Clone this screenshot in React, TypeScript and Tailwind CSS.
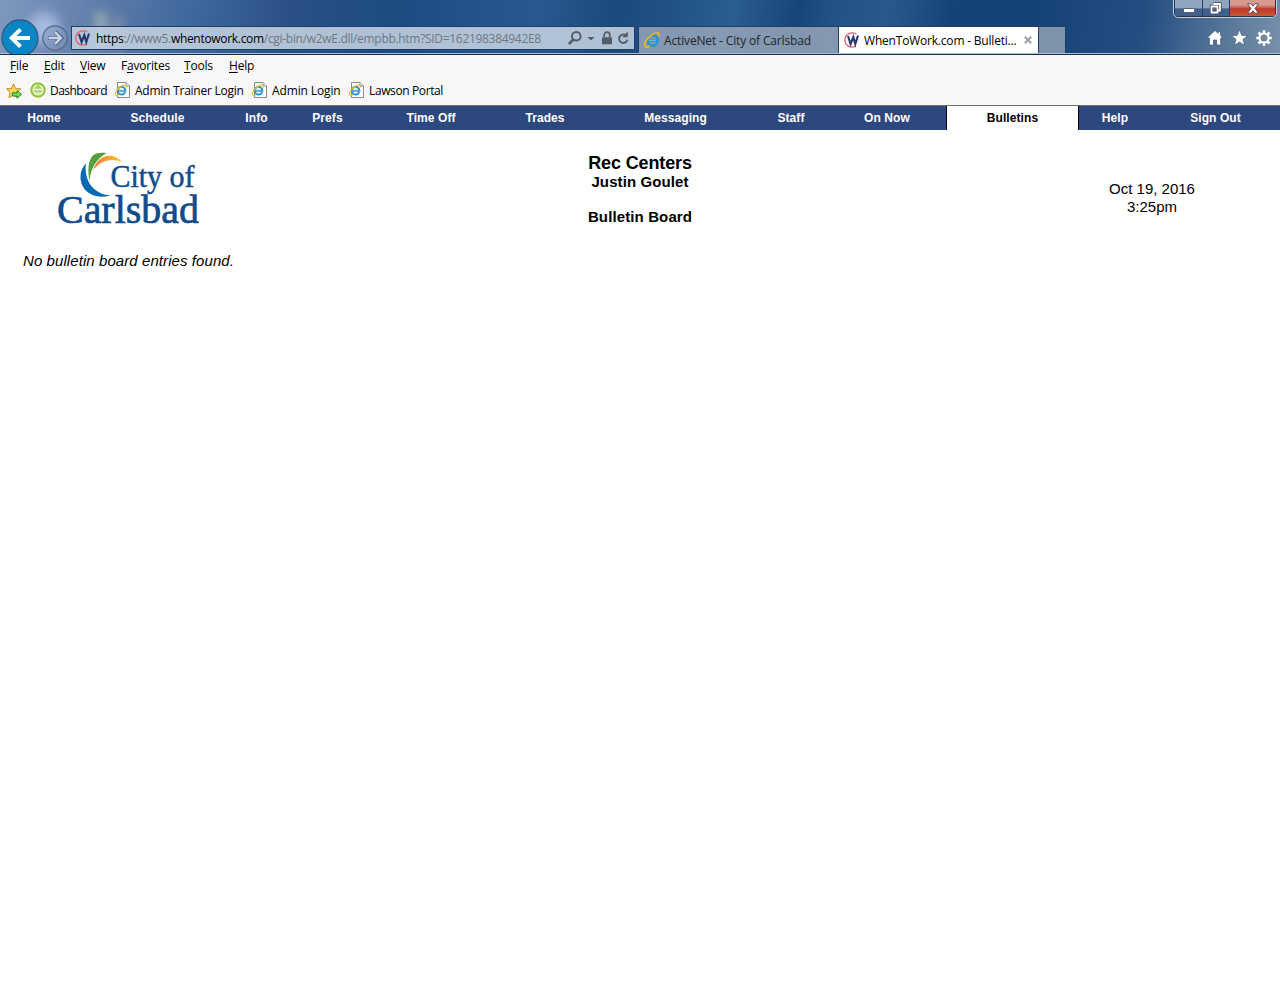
import React from "react";

function WhenToWorkIcon() {
  return (
    <svg className="h-4 w-4 shrink-0" viewBox="0 0 16 16" fill="none">
      <path d="M12.500 2C7.500-.8.9 1.800.9 8c0 6.500 6.500 8.600 11.100 6" stroke="#e0606a" strokeWidth="1.300" />
      <path d="M4 4 6.600 12 9.300 5l2 7L14 3.500" stroke="#26396f" strokeWidth="2.100" />
    </svg>
  );
}

function ExplorerGlyph() {
  return (
    <>
      <path d="M13.500 10.500A5.200 5.200 0 1 1 13.900 8.600H5" fill="none" stroke="#2a92d2" strokeWidth="2.600" />
      <path d="M5 8.300h7" stroke="#8fd6f5" strokeWidth=".8" />
      <path d="M14.800 4.500C16 .3 12 0 8.300 2.500 3.300 5.500-.8 12 1.200 14.500c.8 1 2.600.5 4.200-.5" fill="none" stroke="#f3bd16" strokeWidth="1.500" />
    </>
  );
}

function ExplorerIcon() {
  return (
    <svg className="h-4 w-4 shrink-0" viewBox="0 0 16 16">
      <ExplorerGlyph />
    </svg>
  );
}

function PageIcon() {
  return (
    <svg className="relative -top-px h-4 w-4 shrink-0" viewBox="0 0 16 16">
      <path d="M2.500.5h8.500l3.500 3.500v11.500h-12z" fill="#fdfdfd" stroke="#8b8b8b" />
      <path d="M11 .5v3.500h3.500" fill="#eee" stroke="#8b8b8b" />
      <g transform="translate(0 2.300) scale(.75)">
        <ExplorerGlyph />
      </g>
    </svg>
  );
}

function DashboardIcon() {
  return (
    <svg className="relative -top-px h-4 w-4 shrink-0" viewBox="0 0 16 16">
      <rect width="16" height="16" fill="#fff" />
      <circle cx="8" cy="8" r="6.700" fill="#f2f8e2" stroke="#8fc63d" strokeWidth="2.200" />
      <path d="M3.500 6.800 8 2.500l4.500 4.300z" fill="#a5d15b" />
      <path d="M4 8.500h3.500v1.700H5zM8.500 8.500H12l-1 1.700H8.500zM6 12h4" fill="#a5d15b" stroke="#a5d15b" strokeWidth=".6" />
    </svg>
  );
}

function AddFavoriteIcon() {
  return (
    <svg className="h-4 w-4 shrink-0" viewBox="0 0 16 16">
      <path d="m7.500.8 2 4.700 5.300.4-4 3.500 1.300 5.200-4.600-2.700-4.600 2.700 1.200-5.200L.5 5.900l5-.4z" fill="#fbd85c" stroke="#cf8a16" strokeLinejoin="round" />
      <path d="M6.500 9.800H11V7.700l4.500 3.700-4.500 3.800v-2.100H6.500z" fill="#6fdc55" stroke="#167c18" strokeWidth=".9" />
    </svg>
  );
}

function BackButton() {
  return (
    <svg className="h-[38px] w-[38px] shrink-0" viewBox="0 0 38 38">
      <circle cx="19" cy="19" r="18" fill="#0a86c6" stroke="#2f5c7d" strokeWidth="1.300" />
      <path d="M29 19H11.500M19.500 10.300 10.800 19l8.700 8.700" fill="none" stroke="#fff" strokeWidth="4" />
    </svg>
  );
}

function ForwardButton() {
  return (
    <svg className="h-[26px] w-[26px] shrink-0" viewBox="0 0 26 26">
      <circle cx="13" cy="13" r="12.200" fill="#8297bd" fillOpacity=".55" stroke="#506889" strokeWidth="1.200" />
      <path d="M6 13h13M13 6.700l6.300 6.300-6.300 6.300" fill="none" stroke="#53698e" strokeWidth="4.200" />
      <path d="M6.500 13h12M13 7.200l5.800 5.800-5.800 5.800" fill="none" stroke="#cbd5e5" strokeWidth="2.400" />
    </svg>
  );
}

function AddressTools() {
  return (
    <svg className="h-4 w-[62px] shrink-0" viewBox="0 0 62 16" fill="none" stroke="#545c67">
      <circle cx="8.300" cy="6.300" r="4.300" strokeWidth="2" />
      <path d="M5.300 9.500.9 14" strokeWidth="2.600" />
      <path d="M19.500 7h7L23 10.500z" fill="#545c67" stroke="none" />
      <path d="M34 7.300h10v7H34z" fill="#545c67" stroke="none" />
      <path d="M36.200 7.300V5a2.800 2.800 0 0 1 5.600 0v2.300" strokeWidth="1.800" />
      <path d="M58 5.500a4.200 4.200 0 1 0 1.400 4.200" strokeWidth="1.900" />
      <path d="M59.800 1.500v5.700h-5.600z" fill="#545c67" stroke="none" />
    </svg>
  );
}

function WindowButtons() {
  return (
    <div className="absolute right-[3px] top-[-1px] flex h-[19px] w-[104px] overflow-hidden rounded-b-[5px] border border-[#c3cfdd] bg-[#26374d] p-px pt-0">
      <div className="flex w-[28px] items-center justify-center border-r border-[#2c3e58] bg-gradient-to-b from-[#92a5bf] from-50% to-[#405f8a] to-55%">
        <svg className="mt-1 h-[5px] w-3" viewBox="0 0 12 5">
          <path d="M.5.5h11v4H.5z" fill="#fff" stroke="#566174" />
        </svg>
      </div>
      <div className="flex w-[27px] items-center justify-center border-r border-[#2c3e58] bg-gradient-to-b from-[#92a5bf] from-50% to-[#405f8a] to-55% pr-[2px]">
        <svg className="h-[13px] w-[13px]" viewBox="0 0 13 13" fill="none">
          <path d="M4.500 2H11v6.500H9M2.500 4.500h6v6h-6z" stroke="#3f4b60" strokeWidth="3.400" />
          <path d="M4.500 2H11v6.500H9M2.500 4.500h6v6h-6z" stroke="#fff" strokeWidth="1.800" />
        </svg>
      </div>
      <div className="flex grow items-center justify-center bg-gradient-to-b from-[#d79a91] from-30% via-[#bf3a28] via-55% to-[#cc5636]">
        <svg className="h-[11px] w-3" viewBox="0 0 12 11">
          <path d="M.5.8h3.600L6 3.200 7.900.8h3.600L8 5.500l3.500 4.700H7.900L6 7.800l-1.900 2.400H.5L4 5.500z" fill="#fff" stroke="#56404a" strokeWidth=".9" />
        </svg>
      </div>
    </div>
  );
}

function BrowserTools() {
  return (
    <svg className="h-5 w-[70px]" viewBox="0 0 70 20" fill="#fff" stroke="#41597c" strokeWidth=".7">
      <path d="M9 2.500 1 10h2.500v7h4v-5h3.200v5h4v-7H17l-2.500-2.300V3.500h-2.300v1.900z" />
      <path d="m33.500 1.500 2.200 5.800 6 .3-4.700 3.800 1.700 6-5.200-3.300-5.200 3.300 1.700-6-4.700-3.800 6-.3z" />
      <g fill="none">
        <path stroke="#fff" strokeWidth="2.500" d="M58 2.300v3M58 14.700v3M50.300 10h3M62.700 10h3M52.500 4.500l2.200 2.200M61.300 13.300l2.200 2.200M63.500 4.500l-2.200 2.200M54.700 13.300l-2.200 2.200" />
        <circle cx="58" cy="10" r="4.600" stroke="#fff" strokeWidth="2.200" />
      </g>
    </svg>
  );
}

function TitleArea() {
  return (
    <header className="relative flex h-[55px] items-start overflow-hidden border-b border-[#17304f] bg-[linear-gradient(100deg,#7f98bf_0%,#6783ae_6%,#426b9f_14%,#285087_23%,#1c4b82_31%,#2a578f_42%,#1b497d_48%,#235486_53%,#2c5d90_57%,#174577_62%,#235385_65%,#29598c_69%,#164376_74%,#154275_80%,#234e81_89%,#63809f_97%,#7790ab_100%)]">
      <div className="absolute left-[28px] top-3 h-8 w-8 rounded-full bg-[#bdcdf2]/70 blur-[6px]" />
      <div className="absolute left-[94px] top-3 h-9 w-[14px] bg-[#b3bdb9]/60 blur-[5px]" />
      <div className="absolute left-[113px] top-4 h-9 w-[10px] bg-[#a49d9f]/50 blur-[5px]" />
      <div className="absolute inset-x-0 bottom-0 h-px bg-[#a9bdd6]" />
      <WindowButtons />
      <div className="relative mt-[19px] flex h-[35px] items-start pl-px">
        <BackButton />
        <div className="ml-[3px] mt-[6px]">
          <ForwardButton />
        </div>
      </div>
      <div className="relative ml-[3px] mt-[26px] flex h-6 w-[564px] items-center border border-[#1e3f6a] bg-[#c0cedf]/90 pl-[3px] pr-[4px]">
        <WhenToWorkIcon />
        <p className="ml-[5px] grow whitespace-nowrap pt-px text-[12px] tracking-[-0.305px] text-[#707781]">
          <span className="text-black">https</span>://www5.<span className="text-black">whentowork.com</span>/cgi-bin/w2wE.dll/empbb.htm?SID=162198384942E8
        </p>
        <AddressTools />
      </div>
      <div className="relative ml-[3px] mt-[26px] flex h-[27px] text-[12px]">
        <div className="flex w-[201px] items-center border border-b-0 border-[#1e3f6a] bg-[#96a5b9]/85 pl-[5px]">
          <ExplorerIcon />
          <span className="ml-1 whitespace-nowrap pt-[2px] tracking-[-0.150px] text-[#20262e]">ActiveNet - City of Carlsbad</span>
        </div>
        <div className="flex w-[200px] items-center border-r border-t border-[#1e3f6a] bg-white pl-[5px]">
          <WhenToWorkIcon />
          <span className="ml-1 w-[154px] whitespace-nowrap pt-[2px] tracking-[-0.200px] text-black">WhenToWork.com - Bulleti...</span>
          <svg className="ml-[6px] h-2 w-2" viewBox="0 0 8 8">
            <path d="m.8.8 6.400 6.400M7.200.8.8 7.200" stroke="#a0a0a0" strokeWidth="2" />
          </svg>
        </div>
        <div className="w-[27px] border-r border-t border-[#1e3f6a] bg-[#8b9bb0]/90" />
      </div>
      <div className="relative ml-auto mr-[4px] mt-7">
        <BrowserTools />
      </div>
    </header>
  );
}

const menus = [
  { before: "", key: "F", after: "ile", width: "w-[34px]" },
  { before: "", key: "E", after: "dit", width: "w-[36px]" },
  { before: "", key: "V", after: "iew", width: "w-[41px]" },
  { before: "F", key: "a", after: "vorites", width: "w-[63px]" },
  { before: "", key: "T", after: "ools", width: "w-[45px]" },
  { before: "", key: "H", after: "elp", width: "w-[40px]" },
];

const bookmarks = [
  { label: "Dashboard", icon: <DashboardIcon />, width: "w-[85px] tracking-[-0.550px]" },
  { label: "Admin Trainer Login", icon: <PageIcon />, width: "w-[137px] tracking-[-0.240px]" },
  { label: "Admin Login", icon: <PageIcon />, width: "w-[97px] tracking-[-0.120px]" },
  { label: "Lawson Portal", icon: <PageIcon />, width: "w-[110px] tracking-[-0.380px]" },
];

const sections = [
  { label: "Home", width: "w-[88px]" },
  { label: "Schedule", width: "w-[139px]" },
  { label: "Info", width: "w-[59px]" },
  { label: "Prefs", width: "w-[83px]" },
  { label: "Time Off", width: "w-[124px]" },
  { label: "Trades", width: "w-[104px]" },
  { label: "Messaging", width: "w-[157px]" },
  { label: "Staff", width: "w-[74px]" },
  { label: "On Now", width: "w-[118px]" },
  { label: "Bulletins", width: "w-[133px] border-x border-black bg-white text-black" },
  { label: "Help", width: "w-[72px]" },
  { label: "Sign Out", width: "w-[129px]" },
];

function CityLogo() {
  return (
    <svg className="h-[92px] w-[154px]" viewBox="-4 -6 154 92" fill="#104b8c" stroke="#104b8c" strokeWidth=".5">
      <defs>
        <linearGradient id="swoosh">
          <stop offset="0" stopColor="#f47b3c" />
          <stop offset="1" stopColor="#fdc51b" />
        </linearGradient>
      </defs>
      <g stroke="none">
        <path d="M28.800 12.500C18 24 24 45 44 45.700c3 .1 6-.2 9-1.200C38 43 27 32 28.800 12.500z" fill="#0868b2" />
        <path d="M49.500 2c-6-.7-12 .1-14.500 3.500-4 5-4.500 16-2.300 24.500C33 18 39.500 8 49.500 2z" fill="#549f3a" />
        <path d="M36 19C40.500 6 53-1 65.500 11 53 6.500 44 9.500 36 19z" fill="url(#swoosh)" />
      </g>
      <text x="53.500" y="36" fontFamily="'Liberation Serif', serif" fontSize="31" textLength="84" lengthAdjust="spacingAndGlyphs">City of</text>
      <text x="0" y="72" fontFamily="'Liberation Serif', serif" fontSize="40.500" textLength="142" lengthAdjust="spacingAndGlyphs" strokeWidth=".7">Carlsbad</text>
    </svg>
  );
}

export default function App() {
  return (
    <div className="min-h-[984px] w-[1280px] overflow-hidden bg-white font-['Open_Sans','Noto_Sans',sans-serif] text-black">
      <TitleArea />
      <div className="h-[51px] border-b border-[#707070] bg-[#f7f7f7] text-[12px]">
        <nav className="flex h-[22px] items-center pl-[10px] leading-4">
          {menus.map((m) => (
            <span key={m.key} className={`${m.width} whitespace-nowrap tracking-[-0.200px]`}>
              {m.before}
              <span className="underline underline-offset-2">{m.key}</span>
              {m.after}
            </span>
          ))}
        </nav>
        <div className="flex h-[28px] items-center pl-[6px]">
          <AddFavoriteIcon />
          <div className="ml-2 flex">
            {bookmarks.map((b) => (
              <div key={b.label} className={`${b.width} flex items-center gap-1 whitespace-nowrap leading-4`}>
                {b.icon}
                <span className="-mt-px">{b.label}</span>
              </div>
            ))}
          </div>
        </div>
      </div>
      <nav className="flex h-6 bg-[#2d477f] font-['Liberation_Sans',Arial,sans-serif] text-[12px] font-bold leading-6 tracking-[0.080px] text-white">
        {sections.map((s) => (
          <div key={s.label} className={`${s.width} shrink-0 text-center`}>
            {s.label}
          </div>
        ))}
      </nav>
      <main className="font-['Liberation_Sans',Arial,sans-serif]">
        <div className="grid h-[121px] grid-cols-[256px_768px_256px]">
          <div className="pl-[53px] pt-[15px]">
            <CityLogo />
          </div>
          <div className="pt-[23px] text-center font-bold">
            <h1 className="text-[18px] leading-[20px] tracking-[-0.120px]">Rec Centers</h1>
            <p className="text-[15px] leading-[18px] tracking-[0.100px]">Justin Goulet</p>
            <h2 className="mt-[17px] text-[15px] leading-[18px] tracking-[0.120px]">Bulletin Board</h2>
          </div>
          <div className="pt-[50px] text-center text-[15px] leading-[18px]">
            <p>Oct 19, 2016</p>
            <p>3:25pm</p>
          </div>
        </div>
        <p className="pl-[23px] text-[15px] italic leading-5 tracking-[0.080px]">No bulletin board entries found.</p>
      </main>
    </div>
  );
}
